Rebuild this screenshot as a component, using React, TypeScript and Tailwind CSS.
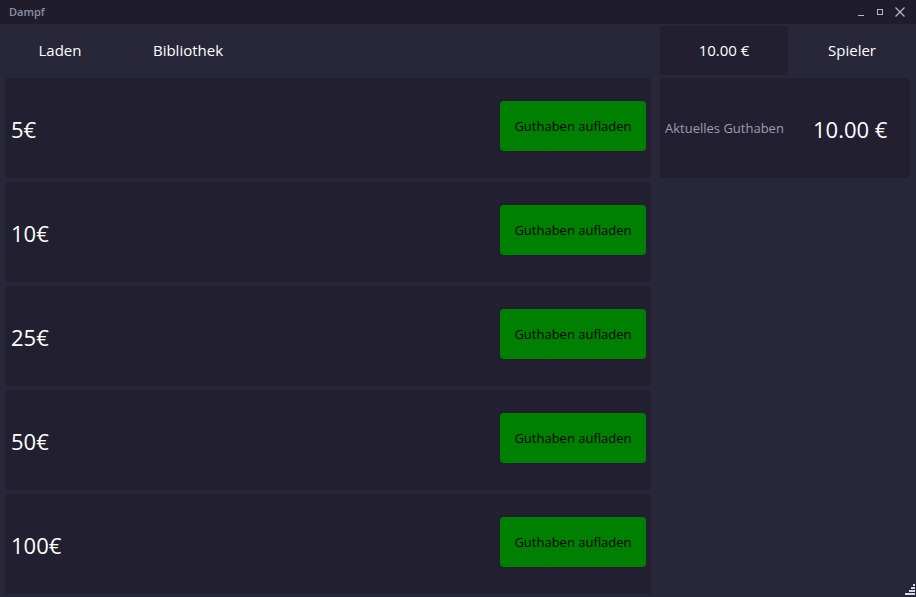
import React from "react";

const amounts = ["5€", "10€", "25€", "50€", "100€"];

export default function App() {
  return (
    <div
      className="w-[916px] h-[597px] bg-[#282639] flex flex-col overflow-hidden relative"
      style={{ fontFamily: '"Open Sans", "Noto Sans", sans-serif' }}
    >
      {/* title bar */}
      <div className="h-[24px] bg-[#1f1d2b] flex items-center justify-between shrink-0">
        <span className="pl-[9px] text-[11px] font-semibold text-[#8a90a8]">Dampf</span>
        <div className="flex items-center gap-[9px] pr-[10px] text-[#b8b8c4]">
          <svg width="10" height="10" viewBox="0 0 10 10"><path d="M2 8.5h6" stroke="currentColor" strokeWidth="1" /></svg>
          <svg width="10" height="10" viewBox="0 0 10 10"><rect x="2.5" y="2.5" width="5" height="5" fill="none" stroke="currentColor" strokeWidth="1" /></svg>
          <svg width="12" height="12" viewBox="0 0 12 12"><path d="M1.5 1.5l9 9M10.5 1.5l-9 9" stroke="currentColor" strokeWidth="1.2" /></svg>
        </div>
      </div>

      {/* nav */}
      <div className="h-[50px] mt-[1px] flex items-center text-white text-[15px] shrink-0">
        <div className="w-[120px] text-center">Laden</div>
        <div className="w-[136px] text-center">Bibliothek</div>
        <div className="flex-1" />
        <div className="w-[128px] h-[49px] bg-[#222030] flex items-center justify-center text-[15px]">10.00 €</div>
        <div className="w-[128px] text-center">Spieler</div>
      </div>

      {/* content */}
      <div className="flex gap-[9px] pl-[5px] pr-[6px] pt-[3px]">
        <div className="w-[646px] flex flex-col gap-[4px]">
          {amounts.map((a) => (
            <div key={a} className="h-[100px] bg-[#222030] rounded-[4px] flex items-center justify-between pl-[6px] pr-[5px]">
              <span className="text-white text-[22px] pt-[2px]">{a}</span>
              <button className="w-[146px] h-[50px] bg-[#008000] rounded-[4px] text-black text-[13px] -mt-[4px] pt-[1px]">
                Guthaben aufladen
              </button>
            </div>
          ))}
        </div>
        <div className="w-[250px]">
          <div className="h-[100px] bg-[#222030] rounded-[4px] flex items-center pl-[5px] pt-[2px]">
            <span className="text-[#9c9db2] text-[13px] w-[148px]">Aktuelles Guthaben</span>
            <span className="text-white text-[22px]">10.00 €</span>
          </div>
        </div>
      </div>

      {/* resize grip */}
      <svg className="absolute right-[1px] bottom-[1px]" width="12" height="12" viewBox="0 0 12 12">
        {[
          [10, 0], [8, 3], [10, 3], [6, 6], [8, 6], [10, 6], [2, 9], [4, 9], [6, 9], [8, 9], [10, 9],
        ].map(([x, y], i) => (
          <rect key={i} x={x} y={y} width="2" height="2" fill="#d8d8ee" />
        ))}
      </svg>
    </div>
  );
}
